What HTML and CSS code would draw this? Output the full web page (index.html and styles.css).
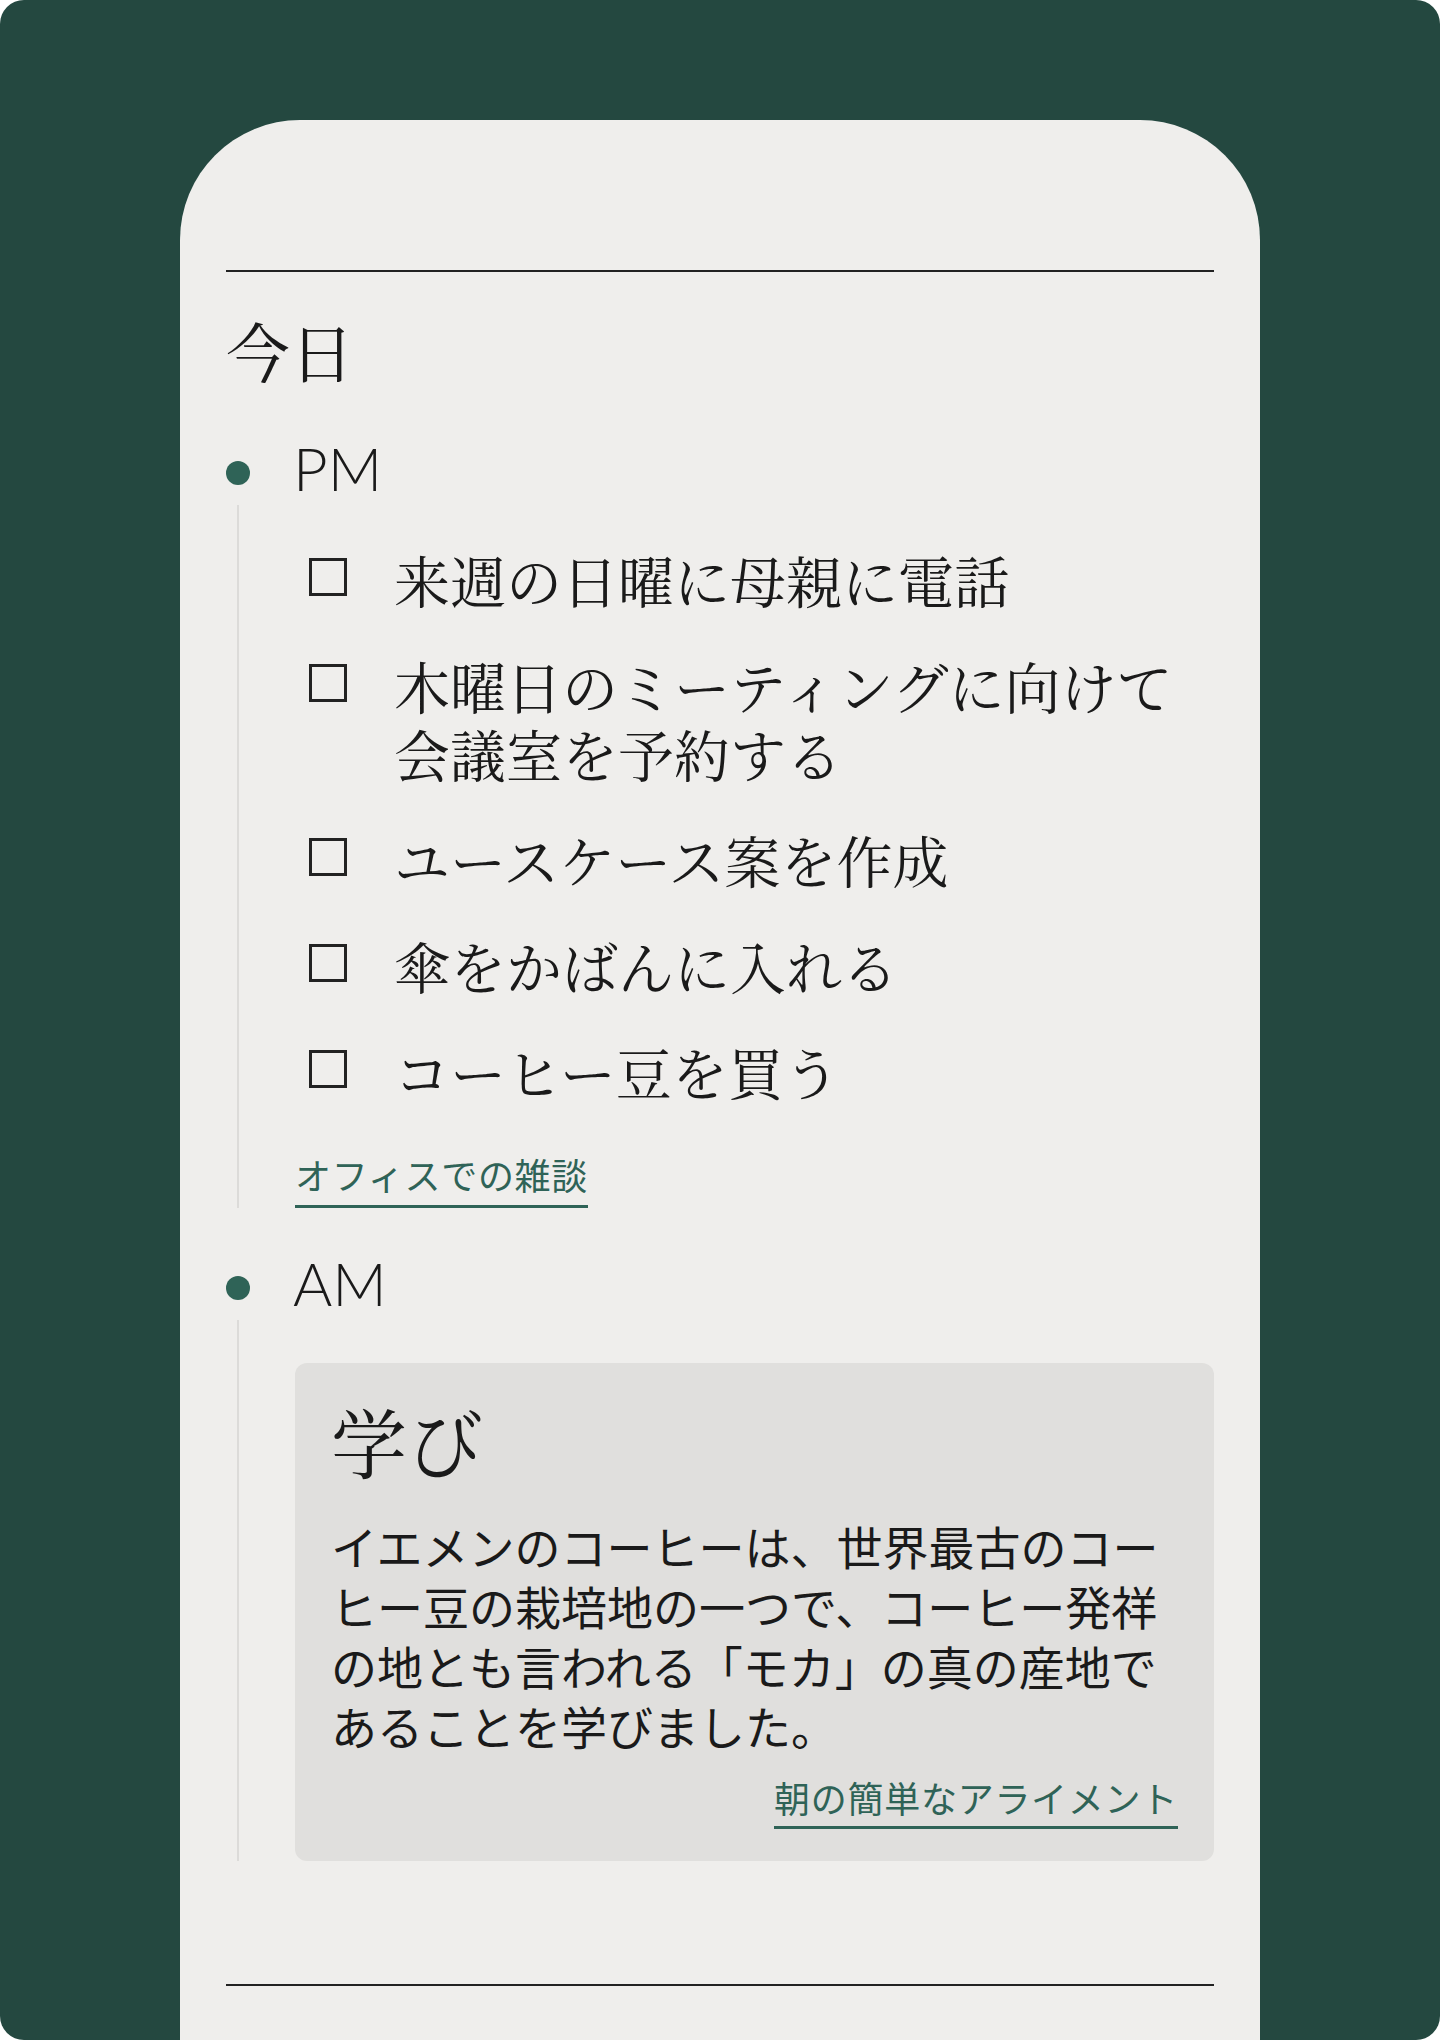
FILE: index.html
```html
<!DOCTYPE html>
<html lang="ja">
<head>
    <meta charset="UTF-8">
    <title>今日</title>
    <link rel="stylesheet" href="styles.css">
</head>
<body>
    <div class="frame">
        <main class="sheet">
            <hr class="rule">

            <h1 class="day">今日</h1>

            <section class="period">
                <div class="period-head">
                    <span class="dot"></span>
                    <h2>PM</h2>
                </div>
                <div class="period-body">
                    <ul class="tasks">
                        <li><span class="check"></span><span class="task-text">来週の日曜に母親に電話</span></li>
                        <li><span class="check"></span><span class="task-text">木曜日のミーティングに向けて会議室を予約する</span></li>
                        <li><span class="check"></span><span class="task-text">ユースケース案を作成</span></li>
                        <li><span class="check"></span><span class="task-text">傘をかばんに入れる</span></li>
                        <li><span class="check"></span><span class="task-text">コーヒー豆を買う</span></li>
                    </ul>
                    <a class="tag" href="#">オフィスでの雑談</a>
                </div>
            </section>

            <section class="period">
                <div class="period-head">
                    <span class="dot"></span>
                    <h2>AM</h2>
                </div>
                <div class="period-body">
                    <div class="note">
                        <h3>学び</h3>
                        <p>イエメンのコーヒーは、世界最古のコーヒー豆の栽培地の一つで、コーヒー発祥の地とも言われる「モカ」の真の産地であることを学びました。</p>
                        <div class="note-foot">
                            <a class="tag" href="#">朝の簡単なアライメント</a>
                        </div>
                    </div>
                </div>
            </section>

            <hr class="rule rule-bottom">
        </main>
    </div>
</body>
</html>
```

FILE: styles.css
```css
* {
    margin: 0;
    padding: 0;
    box-sizing: border-box;
}

body {
    background: #ffffff;
    color: #1a1a1a;
    font-family: "Noto Sans CJK JP", sans-serif;
}

.frame {
    height: 2040px;
    background: #244840;
    border-radius: 24px;
    overflow: hidden;
    padding-top: 120px;
}

.sheet {
    display: block;
    width: 1080px;
    min-height: 1920px;
    margin-left: 180px;
    padding: 150px 46px 0;
    background: #efeeec;
    border-radius: 120px 120px 0 0;
}

.rule {
    border: none;
    height: 2px;
    background: #222222;
}

.rule-bottom {
    margin-top: 123px;
}

.day,
.task-text,
.note h3 {
    font-family: "Noto Serif CJK JP", "Liberation Serif", serif;
    font-weight: 400;
}

.day {
    font-size: 64px;
    line-height: 76px;
    margin-top: 39px;
    padding-bottom: 8px;
}

.period {
    margin-top: 36px;
}

.period + .period {
    margin-top: 38px;
}

.period-head {
    display: flex;
    align-items: center;
}

.dot {
    width: 24px;
    height: 24px;
    border-radius: 50%;
    background: #2f6357;
    margin-top: 10px;
    flex: none;
}

.period-head h2 {
    font-family: Lato, "Noto Sans", sans-serif;
    font-weight: 300;
    font-size: 60px;
    line-height: 74px;
    margin-left: 43px;
}

.period-body {
    margin-left: 11px;
    border-left: 2px solid #dcdbd9;
    padding: 40px 0 0 56px;
}

.tasks {
    list-style: none;
    display: flex;
    flex-direction: column;
    gap: 38px;
}

.tasks li {
    display: flex;
    align-items: flex-start;
}

.check {
    flex: none;
    width: 38px;
    height: 38px;
    border: 3px solid #222222;
    margin: 13px 47px 0 14px;
}

.task-text {
    font-size: 56px;
    line-height: 68px;
}

.tag {
    display: inline-block;
    font-size: 36px;
    letter-spacing: 0.02em;
    line-height: 52px;
    color: #2f6357;
    text-decoration: none;
    padding-bottom: 3px;
    border-bottom: 3px solid #2f6357;
}

.tasks + .tag {
    margin-top: 43px;
    padding-bottom: 5px;
}

.note {
    margin-top: 3px;
    margin-bottom: 4px;
    background: #e0dfdd;
    border-radius: 12px;
    padding: 32px 36px 32px;
}

.note h3 {
    font-size: 76px;
    line-height: 92px;
}

.note p {
    font-size: 46px;
    line-height: 60px;
    margin-top: 28px;
}

.note-foot {
    display: flex;
    justify-content: flex-end;
    margin-top: 16px;
}
```
